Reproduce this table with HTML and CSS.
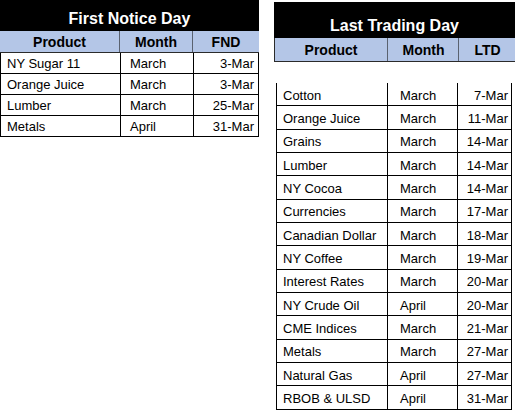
FILE: index.html
```html
<!DOCTYPE html>
<html>
<head>
<meta charset="utf-8">
<link rel="stylesheet" href="styles.css">
</head>
<body>
<div class="page">
  <section class="panel left">
    <div class="title t-left">First Notice Day</div>
    <div class="grid head head-left">
      <div class="hc">Product</div><div class="hc">Month</div><div class="hc last">FND</div>
    </div>
    <div class="grid data data-left">
      <div class="c p">NY Sugar 11</div><div class="c m">March</div><div class="c d">3-Mar</div>
      <div class="c p">Orange Juice</div><div class="c m">March</div><div class="c d">3-Mar</div>
      <div class="c p">Lumber</div><div class="c m">March</div><div class="c d">25-Mar</div>
      <div class="c p">Metals</div><div class="c m">April</div><div class="c d">31-Mar</div>
    </div>
  </section>
  <section class="panel right">
    <div class="title t-right">Last Trading Day</div>
    <div class="grid head head-right">
      <div class="hc">Product</div><div class="hc">Month</div><div class="hc last">LTD</div>
    </div>
    <div class="grid data data-right">
      <div class="c p">Cotton</div><div class="c m">March</div><div class="c d">7-Mar</div>
      <div class="c p">Orange Juice</div><div class="c m">March</div><div class="c d">11-Mar</div>
      <div class="c p">Grains</div><div class="c m">March</div><div class="c d">14-Mar</div>
      <div class="c p">Lumber</div><div class="c m">March</div><div class="c d">14-Mar</div>
      <div class="c p">NY Cocoa</div><div class="c m">March</div><div class="c d">14-Mar</div>
      <div class="c p">Currencies</div><div class="c m">March</div><div class="c d">17-Mar</div>
      <div class="c p">Canadian Dollar</div><div class="c m">March</div><div class="c d">18-Mar</div>
      <div class="c p">NY Coffee</div><div class="c m">March</div><div class="c d">19-Mar</div>
      <div class="c p">Interest Rates</div><div class="c m">March</div><div class="c d">20-Mar</div>
      <div class="c p">NY Crude Oil</div><div class="c m">April</div><div class="c d">20-Mar</div>
      <div class="c p">CME Indices</div><div class="c m">March</div><div class="c d">21-Mar</div>
      <div class="c p">Metals</div><div class="c m">March</div><div class="c d">27-Mar</div>
      <div class="c p">Natural Gas</div><div class="c m">April</div><div class="c d">27-Mar</div>
      <div class="c p">RBOB &amp; ULSD</div><div class="c m">April</div><div class="c d">31-Mar</div>
    </div>
  </section>
</div>
</body>
</html>
```

FILE: styles.css
```css
html, body {
  margin: 0;
  padding: 0;
  background: #ffffff;
}
body {
  font-family: "Liberation Sans", Arial, sans-serif;
  color: #000000;
  overflow: hidden;
}
.page {
  display: flex;
  align-items: flex-start;
  width: 515px;
  height: 413px;
}
.panel {
  display: flex;
  flex-direction: column;
}
.left {
  width: 259px;
}
.right {
  width: 241px;
  margin-left: 15px;
  margin-top: 2px;
}
.title {
  background: #000000;
  color: #ffffff;
  font-weight: bold;
  font-size: 16px;
  display: flex;
  justify-content: center;
  align-items: flex-end;
  box-sizing: border-box;
}
.t-left {
  height: 31px;
  padding-bottom: 3px;
}
.t-right {
  height: 36px;
  padding-bottom: 3px;
}
.grid {
  display: grid;
}
.head {
  background: #b4c6e7;
  font-weight: bold;
  font-size: 14px;
  border-bottom: 1px solid #2b2b2b;
}
.head-left {
  grid-template-columns: 120px 73px 66px;
  height: 22px;
  box-sizing: border-box;
}
.head-right {
  grid-template-columns: 114px 70px 57px;
  height: 24px;
  box-sizing: border-box;
  border-left: 1px solid #2b2b2b;
}
.head-right .hc:first-child {
  width: 113px;
}
.hc {
  display: flex;
  align-items: center;
  justify-content: center;
  border-right: 1px solid #5a6270;
  box-sizing: border-box;
}
.hc.last {
  border-right: none;
}
.data {
  border-left: 1px solid #000000;
  font-size: 13px;
}
.data-left {
  grid-template-columns: 120px 73px 65px;
  grid-auto-rows: 21px;
}
.data-right {
  margin-top: 21px;
  margin-left: 2px;
  width: 236px;
  grid-template-columns: 111px 70px 54px;
  grid-auto-rows: 23.33px;
}
.data-right .c {
  padding-top: 2px;
}
.c {
  display: flex;
  align-items: center;
  box-sizing: border-box;
  border-right: 1px solid #000000;
  border-bottom: 1px solid #000000;
  white-space: nowrap;
}
.data-left .p { padding-left: 6px; }
.data-left .m { padding-left: 9px; }
.data-left .d { justify-content: flex-end; padding-right: 4px; }
.data-right .p { padding-left: 6px; }
.data-right .m { padding-left: 12px; }
.data-right .d { justify-content: flex-end; padding-right: 3px; }
```
